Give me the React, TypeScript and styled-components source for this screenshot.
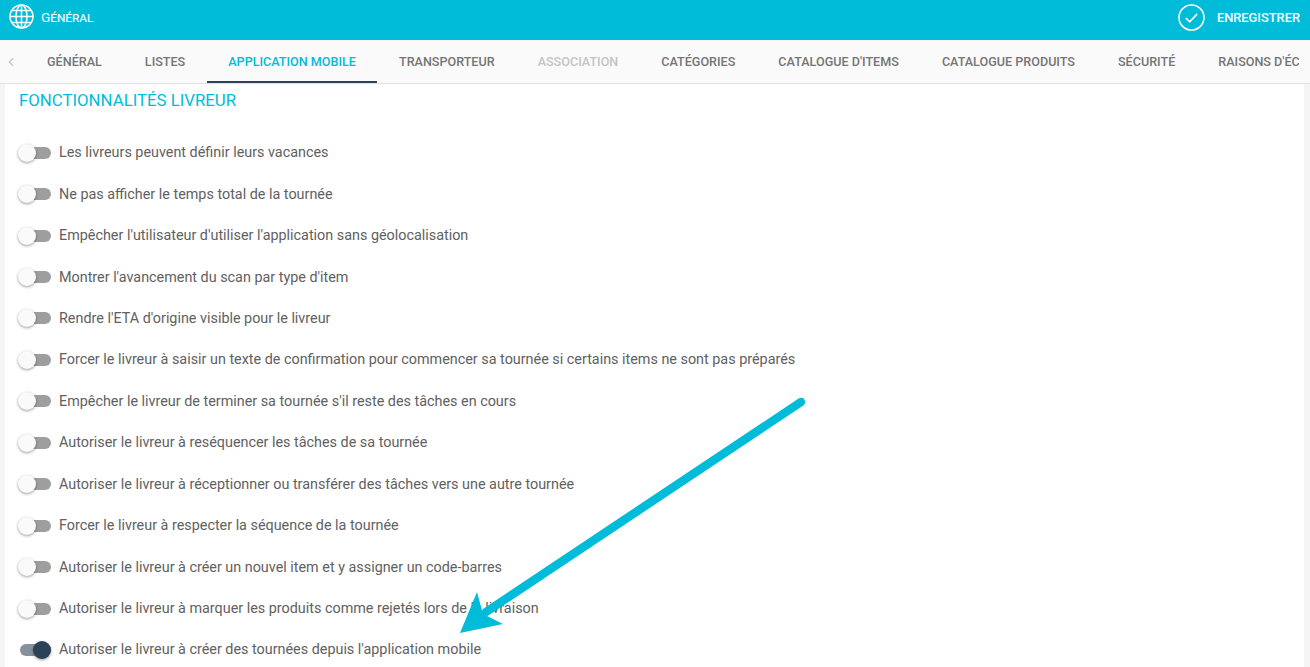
import React from 'react';
import styled, { createGlobalStyle } from 'styled-components';
import { ChevronLeft } from 'lucide-react';

const Global = createGlobalStyle`
    html, body {
        margin: 0;
        padding: 0;
        background: #f5f5f5;
    }
    body {
        font-family: Roboto, "Liberation Sans", sans-serif;
    }
`;

const Page = styled.div`
    position: relative;
    width: 1310px;
    height: 667px;
    overflow: hidden;
    display: flex;
    flex-direction: column;
    background: #f5f5f5;
`;

const TopBar = styled.header`
    height: 40px;
    flex: none;
    display: flex;
    align-items: center;
    justify-content: space-between;
    padding: 0 10px 0 9px;
    background: #00bcd8;
    color: #fff;
`;

const TitleGroup = styled.div`
    display: flex;
    align-items: center;
    gap: 7px;
    margin-top: -7px;
`;

const PageTitle = styled.span`
    font-size: 13.7px;
    font-variant: small-caps;
    line-height: 24px;
`;

const SaveButton = styled.div`
    display: flex;
    align-items: center;
    gap: 12px;
    margin-top: -6px;
    font-size: 12.85px;
    font-weight: 500;
`;

const TabBar = styled.nav`
    height: 43px;
    flex: none;
    display: flex;
    align-items: stretch;
    padding-right: 11px;
    background: #fafafa;
    border-bottom: 1px solid #e0e0e0;
    overflow: hidden;
`;

const Chevron = styled.div`
    width: 25.5px;
    flex: none;
    display: flex;
    align-items: center;
    padding-left: 4px;
    box-sizing: border-box;
    color: #c4c4c4;
`;

const TabTrack = styled.div`
    display: flex;
    overflow: hidden;
`;

const Tab = styled.div<{ $active?: boolean; $disabled?: boolean }>`
    flex: none;
    display: flex;
    align-items: center;
    padding: 0 21.5px;
    font-size: 12.6px;
    font-weight: 500;
    white-space: nowrap;
    color: ${(p) => (p.$active ? '#00bcd8' : p.$disabled ? '#c4c4c4' : '#757575')};
    box-shadow: ${(p) => (p.$active ? 'inset 0 -2px 0 #2b4257' : 'none')};
`;

const Content = styled.main`
    flex: 1;
    margin: 0 6px 0 5px;
    padding: 5px 14px 0;
    background: #fff;
    border-bottom: 1px solid #bdbdbd;
    box-sizing: border-box;
`;

const SectionTitle = styled.h2`
    margin: 0 0 21px;
    font-size: 16.8px;
    font-weight: 400;
    line-height: 22px;
    color: #00bcd8;
`;

const OptionList = styled.div`
    display: flex;
    flex-direction: column;
`;

const Option = styled.label`
    height: 41.45px;
    display: flex;
    align-items: center;
    gap: 8px;
    font-size: 14.37px;
    color: #616161;
`;

const Switch = styled.span<{ $on?: boolean }>`
    position: relative;
    width: 31px;
    height: 12px;
    margin-left: 1px;
    flex: none;
    border-radius: 6px;
    background: ${(p) => (p.$on ? '#85929e' : '#9e9e9e')};
`;

const Knob = styled.span<{ $on?: boolean }>`
    position: absolute;
    top: -3px;
    left: ${(p) => (p.$on ? '13px' : '-2px')};
    width: 18px;
    height: 18px;
    border-radius: 50%;
    background: ${(p) => (p.$on ? '#2b4257' : '#fafafa')};
    box-shadow: 0 1px 3px rgba(0, 0, 0, 0.4);
`;

const Arrow = styled.svg`
    position: absolute;
    left: 0;
    top: 0;
    pointer-events: none;
`;

const TABS = [
    { label: 'GÉNÉRAL' },
    { label: 'LISTES' },
    { label: 'APPLICATION MOBILE', active: true },
    { label: 'TRANSPORTEUR' },
    { label: 'ASSOCIATION', disabled: true },
    { label: 'CATÉGORIES' },
    { label: "CATALOGUE D'ITEMS" },
    { label: 'CATALOGUE PRODUITS' },
    { label: 'SÉCURITÉ' },
    { label: "RAISONS D'ÉCHEC" },
];

const OPTIONS = [
    'Les livreurs peuvent définir leurs vacances',
    'Ne pas afficher le temps total de la tournée',
    "Empêcher l'utilisateur d'utiliser l'application sans géolocalisation",
    "Montrer l'avancement du scan par type d'item",
    "Rendre l'ETA d'origine visible pour le livreur",
    'Forcer le livreur à saisir un texte de confirmation pour commencer sa tournée si certains items ne sont pas préparés',
    "Empêcher le livreur de terminer sa tournée s'il reste des tâches en cours",
    'Autoriser le livreur à reséquencer les tâches de sa tournée',
    'Autoriser le livreur à réceptionner ou transférer des tâches vers une autre tournée',
    'Forcer le livreur à respecter la séquence de la tournée',
    'Autoriser le livreur à créer un nouvel item et y assigner un code-barres',
    'Autoriser le livreur à marquer les produits comme rejetés lors de la livraison',
    "Autoriser le livreur à créer des tournées depuis l'application mobile",
];

const GlobeIcon = () => (
    <svg width="25" height="25" viewBox="0 0 25 25" fill="none" stroke="#fff" strokeWidth="1.5">
        <circle cx="12.5" cy="12.5" r="11.5" />
        <ellipse cx="12.5" cy="12.5" rx="5.5" ry="11.5" />
        <path d="M12.5 1v23M1 12.5h23M3 6.5h19M3 18.5h19" />
    </svg>
);

const CheckIcon = () => (
    <svg width="27" height="27" viewBox="0 0 27 27" fill="none" stroke="#fff" strokeWidth="1.6">
        <circle cx="13.5" cy="13.5" r="12.5" />
        <path d="M7.8 14l3.9 3.9 7.5-8" />
    </svg>
);

const App: React.FC = () => {
    return (
        <Page>
            <Global />
            <TopBar>
                <TitleGroup>
                    <GlobeIcon />
                    <PageTitle>Général</PageTitle>
                </TitleGroup>
                <SaveButton>
                    <CheckIcon />
                    ENREGISTRER
                </SaveButton>
            </TopBar>
            <TabBar>
                <Chevron>
                    <ChevronLeft size={14} />
                </Chevron>
                <TabTrack>
                    {TABS.map((tab) => (
                        <Tab key={tab.label} $active={tab.active} $disabled={tab.disabled}>
                            {tab.label}
                        </Tab>
                    ))}
                </TabTrack>
            </TabBar>
            <Content>
                <SectionTitle>FONCTIONNALITÉS LIVREUR</SectionTitle>
                <OptionList>
                    {OPTIONS.map((text, i) => {
                        const on = i === OPTIONS.length - 1;
                        return (
                            <Option key={text}>
                                <Switch $on={on}>
                                    <Knob $on={on} />
                                </Switch>
                                {text}
                            </Option>
                        );
                    })}
                </OptionList>
            </Content>
            <Arrow width="1310" height="667" viewBox="0 0 1310 667">
                <path d="M801 402L486 612" stroke="#00bcd8" strokeWidth="8.5" strokeLinecap="round" fill="none" />
                <path d="M460 633L477 592L483 614L503 624Z" fill="#00bcd8" />
            </Arrow>
        </Page>
    );
};

export default App;
